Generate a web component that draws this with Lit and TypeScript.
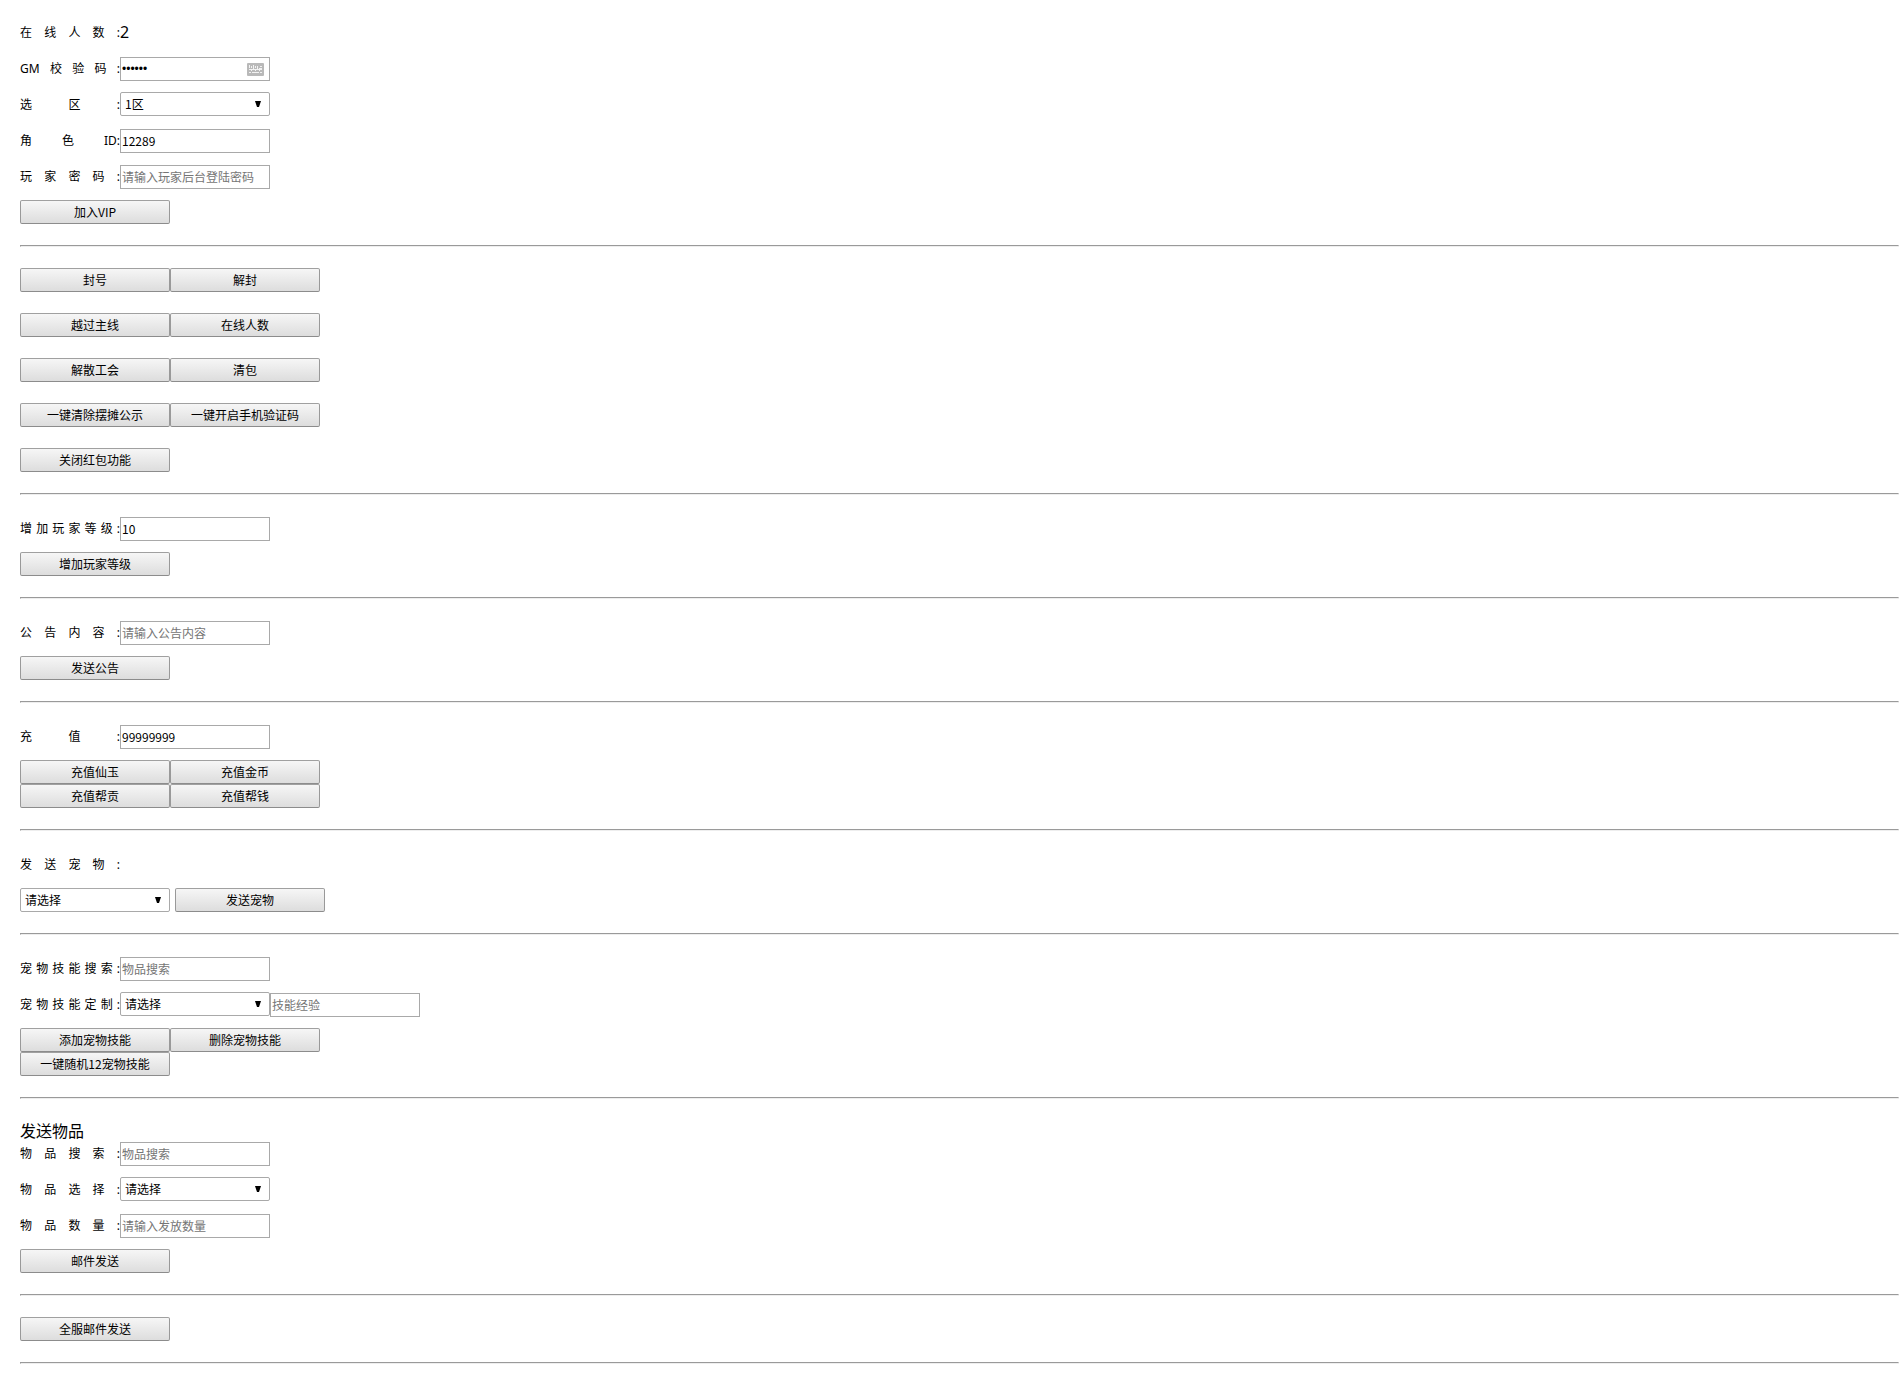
import { LitElement, html, css, svg } from "lit";
import { customElement, property } from "lit/decorators.js";

const controlStyles = css`
  * {
    box-sizing: border-box;
  }
  .row {
    display: flex;
    min-height: 25px;
    align-items: flex-end;
  }
  .label {
    width: 100px;
    flex: none;
    font-family: "Noto Sans", "Noto Sans CJK SC", sans-serif;
    line-height: 24px;
    white-space: nowrap;
    text-align: justify;
    text-align-last: justify;
  }
  .field {
    position: relative;
    width: 150px;
    height: 24px;
    flex: none;
  }
  .input,
  .select,
  .button {
    display: block;
    width: 150px;
    height: 24px;
    margin: 0;
    font: inherit;
    color: #000;
    border: 1px solid #a9a9a9;
    outline: none;
    appearance: none;
  }
  .input {
    padding: 0 1px 2px;
    border-radius: 0;
    background: #fff;
  }
  .input[type="password"] {
    padding-bottom: 0;
    font-family: "Liberation Sans", sans-serif;
  }
  .input::placeholder {
    color: #757575;
    opacity: 1;
  }
  .select {
    padding: 0 20px 0 4px;
    border-radius: 2px;
    background: #fff;
  }
  .pick {
    align-self: flex-start;
  }
  .button {
    padding: 0;
    border-color: #a0a0a0 #999 #8c8c8c;
    border-radius: 2px;
    background: linear-gradient(#f6f6f6, #dddddd);
    text-align: center;
  }
  .arrow,
  .keys {
    position: absolute;
    pointer-events: none;
  }
  .arrow {
    top: 9px;
    right: 9px;
    width: 6px;
    height: 6px;
  }
  .keys {
    top: 6px;
    right: 6px;
    width: 17px;
    height: 13px;
  }
`;

const arrowIcon = html`<svg class="arrow" viewBox="0 0 6 6" aria-hidden="true">
  <path d="M0 0H6L4 6H2Z" fill="#000" />
</svg>`;

const keyCaps = [
  [2, 2, 1, 3], [4, 3, 1, 2], [6, 2, 1, 4], [8, 3, 1, 2], [10, 3, 1, 3], [13, 3, 2, 1],
  [2, 6, 13, 1], [12, 5, 3, 1], [4, 6, 1, 2], [8, 6, 1, 2], [12, 6, 1, 2],
  [2, 9, 2, 1], [5, 9, 7, 1], [13, 9, 2, 1],
];

const keyboardIcon = html`<svg class="keys" viewBox="0 0 17 13" aria-hidden="true">
  <rect width="17" height="13" rx="1" fill="#b9b9b9" />
  ${keyCaps.map(([x, y, w, h]) => svg`<rect x=${x} y=${y} width=${w} height=${h} fill="#f2f2f2" />`)}
</svg>`;

const input = (id: string, opts: { value?: string; hint?: string; type?: string; name?: string } = {}) => html`
  <div class="field">
    <input class="input" id=${id} type=${opts.type ?? "text"} .value=${opts.value ?? ""}
      placeholder=${opts.hint ?? ""} aria-label=${opts.name ?? opts.hint ?? id} autocomplete="off" />
    ${opts.type === "password" ? keyboardIcon : ""}
  </div>
`;

const select = (id: string, name: string, option: string) => html`
  <div class="field pick">
    <select class="select" id=${id} aria-label=${name}><option>${option}</option></select>
    ${arrowIcon}
  </div>
`;

const row = (label: string, id: string, control: unknown) => html`
  <div class="row"><label class="label" for=${id}>${label}:</label>${control}</div>
`;

@customElement("button-grid")
export class ButtonGrid extends LitElement {
  @property({ attribute: false }) rows: string[][] = [];
  @property({ type: Boolean, reflect: true }) spaced = false;

  static styles = [
    controlStyles,
    css`
      :host {
        display: flex;
        flex-direction: column;
      }
      :host([spaced]) {
        gap: 21px;
      }
      .line {
        display: flex;
      }
    `,
  ];

  render() {
    return this.rows.map(
      (names) => html`<div class="line">
        ${names.map((name) => html`<button class="button" type="button">${name}</button>`)}
      </div>`,
    );
  }
}

@customElement("app-root")
export class AppRoot extends LitElement {
  static styles = [
    controlStyles,
    css`
      :host {
        display: block;
        padding: 20px 0 21px 20px;
        background: #fff;
        color: #000;
        font: 12px/16px "Noto Sans CJK SC", "Noto Sans", sans-serif;
      }
      .section {
        display: flex;
        flex-direction: column;
        gap: 11px;
      }
      .rule {
        height: 2px;
        margin: 21px 0;
        border: 1px solid #9a9a9a;
        border-right-color: #eee;
        border-bottom-color: #eee;
      }
      .count {
        font-family: "Noto Sans", sans-serif;
        font-size: 16px;
        line-height: 25px;
      }
      .pair {
        display: flex;
        gap: 5px;
      }
      .heading {
        margin: 0 0 -11px;
        font-size: 16px;
        font-weight: 400;
        line-height: 21px;
      }
    `,
  ];

  render() {
    const rule = html`<hr class="rule" />`;
    return html`
      <section class="section">
        <div class="row">
          <span class="label">在线人数:</span><output class="count">2</output>
        </div>
        ${row("GM校验码", "code", input("code", { type: "password", value: "123456", name: "GM校验码" }))}
        ${row("选区", "zone", select("zone", "选区", "1区"))}
        ${row("角色ID", "role", input("role", { value: "12289", name: "角色ID" }))}
        ${row("玩家密码", "secret", input("secret", { hint: "请输入玩家后台登陆密码", name: "玩家密码" }))}
        <button-grid .rows=${[["加入VIP"]]}></button-grid>
      </section>
      ${rule}
      <button-grid
        spaced
        .rows=${[
          ["封号", "解封"],
          ["越过主线", "在线人数"],
          ["解散工会", "清包"],
          ["一键清除摆摊公示", "一键开启手机验证码"],
          ["关闭红包功能"],
        ]}
      ></button-grid>
      ${rule}
      <section class="section">
        ${row("增加玩家等级", "level", input("level", { value: "10", name: "增加玩家等级" }))}
        <button-grid .rows=${[["增加玩家等级"]]}></button-grid>
      </section>
      ${rule}
      <section class="section">
        ${row("公告内容", "notice", input("notice", { hint: "请输入公告内容", name: "公告内容" }))}
        <button-grid .rows=${[["发送公告"]]}></button-grid>
      </section>
      ${rule}
      <section class="section">
        ${row("充值", "amount", input("amount", { value: "99999999", name: "充值" }))}
        <button-grid .rows=${[["充值仙玉", "充值金币"], ["充值帮贡", "充值帮钱"]]}></button-grid>
      </section>
      ${rule}
      <section class="section">
        ${row("发送宠物", "pet", "")}
        <div class="pair">
          ${select("pet", "发送宠物", "请选择")}
          <button class="button" type="button">发送宠物</button>
        </div>
      </section>
      ${rule}
      <section class="section">
        ${row("宠物技能搜索", "skill-search", input("skill-search", { hint: "物品搜索", name: "宠物技能搜索" }))}
        ${row("宠物技能定制", "skill", html`
          ${select("skill", "宠物技能定制", "请选择")}
          ${input("skill-exp", { hint: "技能经验" })}
        `)}
        <button-grid .rows=${[["添加宠物技能", "删除宠物技能"], ["一键随机12宠物技能"]]}></button-grid>
      </section>
      ${rule}
      <section class="section">
        <h2 class="heading">发送物品</h2>
        ${row("物品搜索", "item-search", input("item-search", { hint: "物品搜索", name: "物品搜索" }))}
        ${row("物品选择", "item", select("item", "物品选择", "请选择"))}
        ${row("物品数量", "item-count", input("item-count", { hint: "请输入发放数量", name: "物品数量" }))}
        <button-grid .rows=${[["邮件发送"]]}></button-grid>
      </section>
      ${rule}
      <button-grid .rows=${[["全服邮件发送"]]}></button-grid>
      ${rule}
    `;
  }
}
